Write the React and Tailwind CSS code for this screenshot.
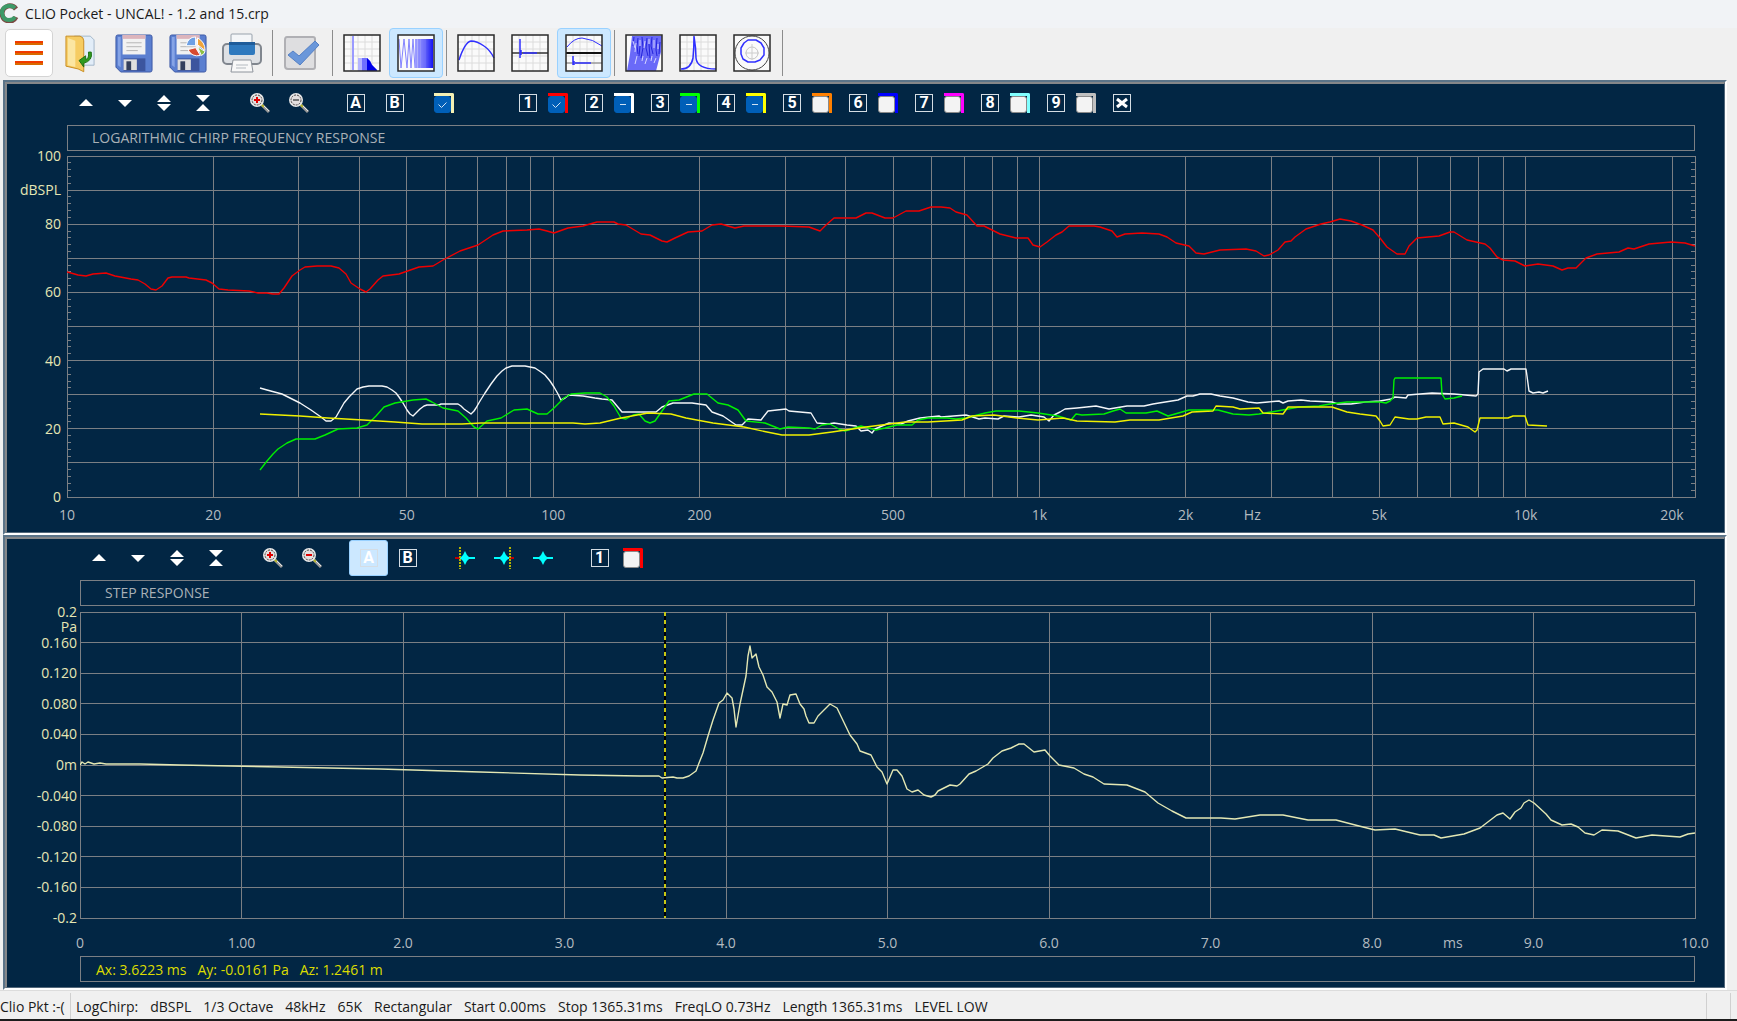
import React, { useState } from 'react';

const RED = '0,116 4,117 11,119 19,120 26,118 39,117 48,120 64,123 71,124 78,128 84,133 89,134 95,130 101,122 105,121 119,121 122,122 139,124 145,127 152,133 161,134 182,135 191,137 200,137 206,138 212,138 217,132 225,120 233,114 238,111 250,110 264,110 272,112 279,118 284,127 293,133 299,136 303,133 311,124 316,120 332,118 352,111 366,110 376,104 393,95 411,89 426,79 436,75 460,74 472,73 480,75 487,77 501,72 516,70 530,66 547,66 551,68 559,69 574,78 583,79 595,85 600,86 608,82 621,76 635,75 645,69 654,68 668,72 677,70 704,70 715,70 742,71 753,75 759,69 767,62 780,62 789,62 799,57 805,57 818,62 826,62 839,55 852,55 864,51 874,51 883,52 889,56 900,59 910,70 917,70 933,78 949,82 961,82 966,89 973,91 980,86 989,79 995,76 1002,70 1027,70 1033,71 1045,75 1050,81 1058,78 1075,77 1092,78 1100,81 1109,87 1122,90 1129,97 1137,98 1153,94 1179,93 1189,95 1197,100 1202,99 1211,94 1218,86 1224,85 1228,81 1239,73 1254,68 1263,66 1273,63 1284,65 1295,69 1306,74 1313,82 1320,91 1330,98 1338,98 1342,90 1350,82 1372,80 1383,76 1387,76 1400,84 1418,88 1423,92 1430,101 1436,104 1448,105 1458,110 1471,108 1486,110 1495,114 1501,112 1509,112 1519,102 1530,98 1552,96 1561,92 1567,93 1582,88 1604,86 1618,87 1628,90';

const WHITE = '193,232 200,234 215,238 233,247 244,254 254,261 259,265 264,265 269,261 273,254 277,247 282,241 287,236 290,233 296,231 302,230 315,230 320,231 325,234 329,237 332,241 336,247 340,254 343,258 346,260 350,256 353,253 357,250 360,249 372,249 374,248 391,248 394,250 397,253 404,258 407,255 409,252 413,245 418,237 424,228 430,220 435,215 439,212 445,210 458,210 463,211 468,212 474,216 478,219 483,225 487,231 491,238 494,244 498,242 502,239 516,240 528,242 535,243 545,244 550,250 555,256 566,256 589,256 595,251 606,247 625,247 639,249 645,256 656,260 669,269 675,269 681,263 694,264 701,255 719,253 722,255 744,257 750,267 761,268 767,267 780,269 789,270 794,275 801,274 805,277 808,273 815,270 822,267 834,268 841,265 853,262 872,260 874,261 899,259 912,263 918,262 931,263 937,260 952,261 964,259 977,261 982,265 987,259 993,256 998,253 1010,252 1029,250 1042,253 1060,250 1077,250 1086,248 1092,247 1111,244 1120,240 1126,240 1133,238 1144,238 1153,240 1166,242 1181,246 1190,247 1201,246 1212,245 1216,247 1221,245 1234,244 1243,245 1265,246 1271,248 1284,248 1298,246 1313,245 1324,243 1328,241 1339,242 1341,239 1365,237 1387,238 1409,240 1411,238 1412,216 1416,213 1437,213 1440,215 1444,213 1459,213 1460,220 1462,235 1466,237 1472,236 1476,237 1481,235';

const GREEN = '193,314 200,305 206,298 211,293 220,287 229,283 248,283 258,279 271,273 290,272 300,269 309,260 317,251 328,247 346,244 359,243 365,246 376,252 391,255 399,262 407,271 411,273 420,265 434,262 447,254 460,253 471,258 480,258 487,252 497,242 504,238 518,237 533,237 540,241 547,250 554,262 559,263 566,259 572,258 578,265 583,267 588,265 595,255 602,245 612,244 627,238 640,238 651,247 661,249 671,254 679,265 698,267 713,273 721,271 742,272 748,273 755,269 763,268 772,273 778,275 794,270 809,274 818,272 830,269 845,269 851,264 861,262 880,262 889,263 899,262 918,257 929,255 952,255 971,257 991,260 1004,264 1009,258 1015,259 1037,258 1046,255 1053,253 1059,257 1079,257 1090,255 1101,260 1122,254 1151,254 1166,258 1182,259 1192,258 1210,255 1221,253 1232,251 1252,250 1263,248 1280,246 1313,246 1319,247 1323,245 1326,242 1327,224 1328,222 1374,222 1375,238 1378,243 1387,242 1395,240';

const YELLOW = '193,258 233,260 261,262 296,264 328,266 355,268 395,268 414,267 506,267 518,268 533,267 554,262 581,257 604,258 619,262 646,267 677,271 700,276 715,279 742,279 765,276 799,271 838,266 861,266 895,264 905,260 927,259 950,262 971,264 996,262 1010,265 1048,266 1063,264 1092,264 1116,260 1125,256 1146,255 1149,250 1166,251 1173,253 1192,252 1196,257 1216,258 1221,251 1265,251 1280,256 1293,258 1309,260 1313,265 1316,270 1323,269 1328,261 1342,263 1350,263 1359,261 1373,261 1376,268 1387,267 1401,271 1408,276 1410,274 1413,262 1441,262 1446,260 1458,260 1461,269 1480,270';

const STEP = '0,153 2,150 5,152 8,150 14,152 20,151 26,152 60,152 100,153 200,155 300,157 400,160 500,163 560,164 579,164 582,166 593,165 597,166 603,166 609,164 616,159 619,151 623,141 628,124 633,108 639,91 643,88 647,81 652,86 654,97 656,115 660,92 666,64 668,44 670,34 672,46 676,42 679,55 683,63 687,75 692,80 697,90 700,106 703,92 707,93 710,83 716,82 720,92 724,97 726,104 729,111 734,111 738,104 750,92 757,96 770,123 777,132 780,139 791,143 797,155 802,160 807,172 813,158 817,158 822,164 827,177 832,180 838,178 844,183 851,185 855,183 858,179 870,173 877,174 880,172 889,162 896,159 908,152 913,146 922,139 931,136 939,132 944,132 954,140 965,138 970,144 979,153 994,156 1004,162 1013,165 1024,172 1047,173 1065,180 1078,191 1092,199 1106,206 1141,206 1155,207 1180,203 1203,203 1228,208 1256,208 1279,214 1295,218 1315,217 1340,223 1354,223 1361,226 1384,222 1400,216 1417,203 1423,201 1430,207 1435,200 1441,196 1444,191 1449,188 1454,191 1466,202 1471,208 1482,213 1491,212 1498,215 1505,221 1514,223 1522,218 1538,219 1556,226 1572,223 1600,225 1608,222 1615,221';

const GRID = '#7b7f84';
const MAX_HZ = 22300;
const hzPos = (hz) => `${(Math.log10(hz / 10) / Math.log10(MAX_HZ / 10)) * 100}%`;

const hzLines = [
  20, 30, 40, 50, 60, 70, 80, 90, 100, 200, 300, 400, 500, 600, 700, 800, 900,
  1000, 2000, 3000, 4000, 5000, 6000, 7000, 8000, 9000, 10000, 20000,
];
const hzLabels = [
  [10, '10'], [20, '20'], [50, '50'], [100, '100'], [200, '200'], [500, '500'],
  [1000, '1k'], [2000, '2k'], [2740, 'Hz'], [5000, '5k'], [10000, '10k'], [20000, '20k'],
];
const msLabels = [
  [0, '0'], [1, '1.00'], [2, '2.0'], [3, '3.0'], [4, '4.0'], [5, '5.0'],
  [6, '6.0'], [7, '7.0'], [8, '8.0'], [8.5, 'ms'], [9, '9.0'], [10, '10.0'],
];
const paLabels = ['0.2', '0.160', '0.120', '0.080', '0.040', '0m', '-0.040', '-0.080', '-0.120', '-0.160', '-0.2'];

const slots = [
  { n: 1, color: 'border-[#ff0000]', state: 'on' },
  { n: 2, color: 'border-[#ffffff]', state: 'mixed' },
  { n: 3, color: 'border-[#00ff00]', state: 'mixed' },
  { n: 4, color: 'border-[#ffff00]', state: 'mixed' },
  { n: 5, color: 'border-[#ff8000]', state: 'off' },
  { n: 6, color: 'border-[#0000ff]', state: 'off' },
  { n: 7, color: 'border-[#ff00ff]', state: 'off' },
  { n: 8, color: 'border-[#80ffff]', state: 'off' },
  { n: 9, color: 'border-[#c0c0c0]', state: 'off' },
];

function Line(props) {
  return <line stroke={GRID} shapeRendering="crispEdges" {...props} />;
}

function Curves({ viewBox, children }) {
  return (
    <svg width="100%" height="100%" viewBox={viewBox} preserveAspectRatio="none" fill="none" strokeWidth="1.4" strokeLinejoin="round">
      {children}
    </svg>
  );
}

function Curve({ points, color }) {
  return <polyline points={points} stroke={color} vectorEffect="non-scaling-stroke" />;
}

function FrequencyChart() {
  return (
    <svg className="block h-full w-full overflow-visible text-[14px]" role="img" aria-label="Frequency response">
      {hzLines.map((hz) => <Line key={hz} x1={hzPos(hz)} x2={hzPos(hz)} y1="0" y2="100%" />)}
      {[10, 20, 30, 40, 50, 60, 70, 80, 90].map((db) => (
        <Line key={db} x1="0" x2="100%" y1={`${db}%`} y2={`${db}%`} />
      ))}
      {Array.from({ length: 50 }, (_, i) => i * 2).map((db) => (
        <g key={db}>
          <Line x1="0" x2="4" y1={`${db}%`} y2={`${db}%`} />
          <svg x="100%" className="overflow-visible">
            <Line x1="-4" x2="0" y1={`${db}%`} y2={`${db}%`} />
          </svg>
        </g>
      ))}
      <rect width="100%" height="100%" fill="none" stroke={GRID} shapeRendering="crispEdges" />
      <Curves viewBox="0 0 1628 341">
        <Curve points={RED} color="#f00000" />
        <Curve points={WHITE} color="#f4f6f8" />
        <Curve points={GREEN} color="#00f000" />
        <Curve points={YELLOW} color="#f0f000" />
      </Curves>
      <g fill="#e6e6b4" textAnchor="end">
        {[100, 80, 60, 40, 20, 0].map((db) => (
          <text key={db} x="-6" y={`${100 - db}%`} dy="5">{db}</text>
        ))}
        <text x="-6" y="10%" dy="5">dBSPL</text>
      </g>
      <g fill="#b4bbc0" textAnchor="middle">
        {hzLabels.map(([hz, label]) => (
          <text key={label} x={hzPos(hz)} y="100%" dy="23">{label}</text>
        ))}
      </g>
    </svg>
  );
}

function StepChart() {
  return (
    <svg className="block h-full w-full overflow-visible text-[14px]" role="img" aria-label="Step response">
      {[10, 20, 30, 40, 50, 60, 70, 80, 90].map((p) => (
        <g key={p}>
          <Line x1={`${p}%`} x2={`${p}%`} y1="0" y2="100%" />
          <Line x1="0" x2="100%" y1={`${p}%`} y2={`${p}%`} />
        </g>
      ))}
      <rect width="100%" height="100%" fill="none" stroke={GRID} shapeRendering="crispEdges" />
      <line x1="36.22%" x2="36.22%" y1="0" y2="100%" stroke="#000" strokeWidth="2" shapeRendering="crispEdges" />
      <line x1="36.22%" x2="36.22%" y1="0" y2="100%" stroke="#c8c814" strokeWidth="2" strokeDasharray="4 4" shapeRendering="crispEdges" />
      <Curves viewBox="0 0 1615 306">
        <Curve points={STEP} color="#e4e8b4" />
      </Curves>
      <g fill="#e6e6b4" textAnchor="end">
        {paLabels.map((label, i) => (
          <text key={label} x="-3" y={`${i * 10}%`} dy="5">{label}</text>
        ))}
        <text x="-3" y="5%" dy="5">Pa</text>
      </g>
      <g fill="#b4bbc0" textAnchor="middle">
        {msLabels.map(([ms, label]) => (
          <text key={label} x={`${ms * 10}%`} y="100%" dy="30">{label}</text>
        ))}
      </g>
    </svg>
  );
}

function TraceCheck({ label, color, state }) {
  const [value, setValue] = useState(state);
  return (
    <label className={`flex size-5 items-end rounded-tr-xs border-t-[3px] border-r-[3px] ${color}`}>
      <span className="grid size-[17px]">
        <input
          type="checkbox"
          aria-label={label}
          checked={value === 'on'}
          ref={(el) => { if (el) el.indeterminate = value === 'mixed'; }}
          onChange={() => setValue(value === 'off' ? 'on' : 'off')}
          className="col-start-1 row-start-1 size-[17px] appearance-none rounded-[3px] border border-[#8a8a8a] bg-[#f3f3f3] checked:border-[#005fb8] checked:bg-[#005fb8] indeterminate:border-[#005fb8] indeterminate:bg-[#005fb8]"
        />
        <svg viewBox="0 0 17 17" className="pointer-events-none col-start-1 row-start-1" fill="none" stroke="#cfe2f4">
          {value === 'on' && <path d="M4.500 8.500 7.500 11.500 12.500 6.500" />}
          {value === 'mixed' && <path d="M6 8.500H12" />}
        </svg>
      </span>
    </label>
  );
}

function ToolButton({ label, active, children }) {
  return (
    <button
      type="button"
      aria-label={label}
      className={`flex h-9 w-[39px] items-center justify-center rounded-[3px] ${active ? 'border border-[#99d1ff] bg-[#cce8ff]' : ''}`}
    >
      {children}
    </button>
  );
}

function Boxed({ children }) {
  return (
    <span className="flex size-[18px] items-center justify-center border border-[#d5dde4] font-[Roboto,sans-serif] text-[16px] leading-none font-bold text-white">
      {children}
    </span>
  );
}

function Magnifier({ sign, color }) {
  return (
    <svg width="22" height="22" viewBox="0 0 22 22" fill="none">
      <path d="M13 13 20 20" stroke="#9a9a9a" strokeWidth="3" />
      <path d="M12 12 15 15" stroke="#b5b52a" strokeWidth="2" />
      <path d="M15 14 20 19" stroke="#e6e6e6" />
      <circle cx="8" cy="8" r="6" fill="#e4dfdf" stroke="#e8e8e8" strokeWidth="2" />
      <circle cx="8" cy="8" r="5" stroke="#4b4444" strokeDasharray="2 1" />
      <path d={sign === '+' ? 'M5 8h6M8 5v6' : 'M5 8h6'} stroke={color} strokeWidth="2" />
    </svg>
  );
}

function Impulse({ marker }) {
  return (
    <svg width="22" height="22" viewBox="0 0 22 22">
      <path d="M1 11H21" stroke="#00ffff" strokeWidth="2" />
      <path d="M11 4 13 8 16 11 13 14 11 18 9 14 6 11 9 8Z" fill="#00ffff" />
      {marker === 'start' && (
        <>
          <path d="M1 11H6" stroke="#c00000" strokeWidth="2" />
          <path d="M6 0V22" stroke="#b4b400" strokeWidth="2" strokeDasharray="2 1" />
        </>
      )}
      {marker === 'end' && (
        <>
          <path d="M16 11H21" stroke="#c00000" strokeWidth="2" />
          <path d="M17 0V22" stroke="#b4b400" strokeWidth="2" strokeDasharray="2 1" />
        </>
      )}
    </svg>
  );
}

function ViewButtons({ minusColor }) {
  return (
    <>
      <ToolButton label="Shift up">
        <svg width="14" height="16" viewBox="0 0 14 16" fill="#fff"><path d="M7 4 14 11H0Z" /></svg>
      </ToolButton>
      <ToolButton label="Shift down">
        <svg width="14" height="16" viewBox="0 0 14 16" fill="#fff"><path d="M0 5H14L7 12Z" /></svg>
      </ToolButton>
      <ToolButton label="Expand">
        <svg width="14" height="18" viewBox="0 0 14 18" fill="#fff"><path d="M7 1 14 8H0ZM0 10H14L7 17Z" /></svg>
      </ToolButton>
      <ToolButton label="Compress">
        <svg width="14" height="18" viewBox="0 0 14 18" fill="#fff"><path d="M0 1H14L7 8ZM7 10 14 17H0Z" /></svg>
      </ToolButton>
      <div className="w-[18px]" />
      <ToolButton label="Zoom in"><Magnifier sign="+" color="#e00000" /></ToolButton>
      <ToolButton label="Zoom out"><Magnifier sign="-" color={minusColor} /></ToolButton>
      <div className="w-[18px]" />
    </>
  );
}

function Panel({ pad, children }) {
  return (
    <section className="mr-[10px] ml-[3px] flex min-h-0 flex-1 border-2 border-t-[#5b7489] border-r-white border-b-white border-l-[#5b7489]">
      <div className={`flex min-w-0 flex-1 flex-col border-t-2 border-r border-b border-l-2 border-t-[#85878a] border-r-[#52677a] border-b-[#52677a] border-l-[#85878a] bg-[#022644] pr-[29px] ${pad}`}>
        {children}
      </div>
    </section>
  );
}

function MainButton({ label, active, children }) {
  return (
    <button
      type="button"
      aria-label={label}
      className={`flex h-[50px] w-[54px] items-center justify-center rounded-[4px] ${active ? 'border border-[#99d1ff] bg-[#cce8ff]' : ''}`}
    >
      {children}
    </button>
  );
}

function Separator() {
  return <div className="flex h-[46px] w-[6px] justify-center"><div className="w-px bg-[#8c8c8c]" /></div>;
}

// framed 38x38 thumbnail used by the measurement buttons
function Thumb({ grid = true, children }) {
  return (
    <svg width="38" height="38" viewBox="0 0 38 38" fill="none">
      <rect x="1" y="1" width="36" height="36" fill="#fafafa" />
      {grid && <path d="M8 1V37M15 1V37M22 1V37M29 1V37M1 8H37M1 15H37M1 22H37M1 29H37" stroke="#dcdcdc" />}
      {children}
      <rect x="1" y="1" width="36" height="36" stroke="#2a2a2a" strokeWidth="1.500" />
    </svg>
  );
}

function Floppy({ chart }) {
  return (
    <svg width="38" height="39" viewBox="0 0 40 40" preserveAspectRatio="none">
      <path d="M3 1H37Q39 1 39 3V37Q39 39 37 39H6L1 34V3Q1 1 3 1Z" fill="#5b7fd0" stroke="#3c58a4" />
      <path d="M3 3H6V34L3 32Z" fill="#86a4e6" />
      <rect x="8" y="1" width="24" height="20" fill="#f2f2f2" />
      <rect x="8" y="1" width="24" height="4" fill="#dcb4bc" />
      <path d="M12 9H28M12 13H28M12 17H24" stroke="#b4b4b4" />
      <rect x="9" y="25" width="23" height="13" fill="#3c559e" />
      <rect x="9" y="26" width="14" height="11" fill="#dedede" />
      <rect x="12" y="28" width="5" height="9" fill="#333f5c" />
      {chart && (
        <g stroke="#fff">
          <path d="M28 12H18Q20 3 28 3Z" fill="#6ea0e4" />
          <path d="M30 11V4Q38 8 38 17L30 11Z" fill="#f0a43c" />
          <path d="M30 13 38 18Q37 21 34 22Z" fill="#8cbf46" />
          <path d="M28 14 33 22Q24 24 20 16Z" fill="#d84a30" />
        </g>
      )}
    </svg>
  );
}

function MainToolbar() {
  return (
    <div className="flex h-[52px] shrink-0 items-center bg-[#f0f0f0] pb-[2px] pl-[5px]">
      <button type="button" aria-label="Menu" className="flex size-12 items-center justify-center rounded-[5px] border border-[#d4d4d4] bg-white">
        <svg width="28" height="26" viewBox="0 0 28 26">
          <path d="M0 3H28M0 13H28M0 23H28" stroke="#f03a00" strokeWidth="4" />
          <path d="M0 4H28M0 14H28M0 24H28" stroke="#d86a00" strokeWidth="2" />
        </svg>
      </button>
      <MainButton label="Open">
        <svg width="30" height="40" viewBox="0 0 32 42">
          <path d="M10 3H27L31 7V34H10Z" fill="#e2edf8" stroke="#9fb4c8" />
          <path d="M1 3H16Q20 4 20 8V41L14 38 1 35Z" fill="#f6cc62" stroke="#c68a1e" />
          <path d="M3 5 11 8V36L3 34Z" fill="#fbe6a2" />
          <path d="M28 20Q30 29 20 32V36L15 29 22 24V28Q26 27 25 20Z" fill="#2f9a1e" stroke="#1d6f12" />
        </svg>
      </MainButton>
      <MainButton label="Save"><Floppy /></MainButton>
      <MainButton label="Save chart"><Floppy chart /></MainButton>
      <MainButton label="Print">
        <svg width="40" height="40" viewBox="0 0 40 40">
          <rect x="9" y="1" width="21" height="16" rx="1" fill="#f4f6f8" stroke="#98a2ac" />
          <rect x="1" y="11" width="38" height="20" rx="4" fill="#dde0e4" stroke="#80868e" strokeWidth="2" />
          <path d="M7 9H33V20Q33 22 31 22H9Q7 22 7 20Z" fill="#2e79be" />
          <path d="M7 9H33V12H7Z" fill="#1e5c9a" />
          <path d="M11 27H29L31 39H9Z" fill="#f8f8f8" stroke="#8e949c" />
          <path d="M14 32H26M14 35H24" stroke="#b4bac0" />
        </svg>
      </MainButton>
      <Separator />
      <MainButton label="Confirm">
        <svg width="36" height="36" viewBox="0 0 36 36">
          <path d="M3 2H29Q31 2 31 4V32Q31 34 29 34H4Q1 34 1 31V5Q1 2 3 2Z" fill="#dedee0" stroke="#b0b0b4" strokeWidth="2" />
          <path d="M4 20 9 16 15 21 31 6 35 10 16 30Z" fill="#6a97da" stroke="#5580c4" />
        </svg>
      </MainButton>
      <Separator />
      <MainButton label="FFT">
        <Thumb>
          <path d="M10 2V36" stroke="#9a9aff" strokeWidth="2" />
          <path d="M15 37V24H24L27 27 29 31 34 36V37Z" fill="#b4b4ff" />
          <path d="M19 37V24H24L27 27 29 31 34 36V37Z" fill="#7070ff" />
          <path d="M24 24 27 27 29 31 34 36V37H24Z" fill="#0000e8" />
        </Thumb>
      </MainButton>
      <MainButton label="Chirp" active>
        <Thumb grid={false}>
          <defs>
            <linearGradient id="chirp">
              <stop offset="0" stopColor="#c8c8ff" />
              <stop offset="1" stopColor="#1414f4" />
            </linearGradient>
          </defs>
          <path d="M2 5 4 34 7 5 10 34 12 5 14 34 16 5 18 34" stroke="#8484ff" />
          <rect x="18" y="5" width="18" height="29" fill="url(#chirp)" />
          <path d="M19 5V34M22 5V34M25 5V34M28 5V34" stroke="#7474ff" />
        </Thumb>
      </MainButton>
      <Separator />
      <MainButton label="Frequency response">
        <Thumb><path d="M2 26Q8 8 14 7Q20 7 27 12Q33 16 37 24" stroke="#3030ff" strokeWidth="1.500" /></Thumb>
      </MainButton>
      <MainButton label="Impulse response">
        <Thumb>
          <path d="M1 19H37" stroke="#333" strokeWidth="1.500" />
          <path d="M9 5V24M10 16V21M12 19H26" stroke="#3030ff" strokeWidth="1.500" />
        </Thumb>
      </MainButton>
      <MainButton label="Frequency and time" active>
        <Thumb>
          <path d="M2 13Q9 4 17 4Q28 5 37 12" stroke="#3030ff" />
          <path d="M1 19H37" stroke="#111" strokeWidth="2" />
          <path d="M1 29H37" stroke="#777" />
          <path d="M8 22V31M9 27V31M10 29H26" stroke="#3030ff" strokeWidth="1.500" />
        </Thumb>
      </MainButton>
      <Separator />
      <MainButton label="Waterfall">
        <Thumb grid={false}>
          <path d="M7 2H37L36 18 31 37H2L5 20Z" fill="#6a6af8" />
          <path d="M9 3 8 12M13 4 12 12 13 20M17 3 18 14 16 24M22 4 21 14 23 22M27 3 26 12 28 20M32 4 31 16 32 22M35 8 34 20M15 12 14 22M24 10 25 24" stroke="#2424dc" />
          <path d="M8 7 10 14M11 9 10 18M15 6 15 12M20 7 19 14M24 5 24 10M29 6 29 14M33 10 33 15M12 22 10 30M18 22 17 27M22 24 20 30M27 22 26 27M31 24 29 29" stroke="#d4d4ff" />
        </Thumb>
      </MainButton>
      <MainButton label="Spectrum">
        <Thumb><path d="M2 35Q12 35 14 24 15 14 15 2 17 14 17 24 18 35 37 35" stroke="#3030ff" strokeWidth="1.500" /></Thumb>
      </MainButton>
      <MainButton label="Polar">
        <Thumb grid={false}>
          <circle cx="19" cy="19" r="17" stroke="#444" />
          <circle cx="19" cy="19" r="6" stroke="#c4c4c4" />
          <path d="M19 10V26M12 19H26" stroke="#ccc" />
          <path d="M11 9 15 6H23L28 9 31 14V21L27 26 22 28H15L10 25 8 20V14Z" stroke="#3030ff" strokeWidth="1.500" strokeLinejoin="round" />
        </Thumb>
      </MainButton>
      <Separator />
    </div>
  );
}

export default function App() {
  return (
    <div className="flex h-screen min-h-[640px] flex-col overflow-hidden bg-[#f0f0f0] font-['Open_Sans','Noto_Sans',sans-serif] text-[14px] whitespace-nowrap text-[#1a1a1a]">
      <header className="flex h-7 shrink-0 items-center gap-[6px] bg-[#f1f3f6] pb-[2px]">
        <svg width="19" height="20" viewBox="0 0 19 20" fill="none">
          <path d="M16 6Q13 2 8 3Q2 5 2 11Q3 18 10 18Q14 18 16 14" stroke="#7c4a44" strokeWidth="5" />
          <path d="M15 5Q12 2 8 3Q2 4 2 10Q3 17 9 17Q13 17 15 14" stroke="#3d9a68" strokeWidth="4" />
        </svg>
        <h1>CLIO Pocket - UNCAL! - 1.2 and 15.crp</h1>
      </header>

      <MainToolbar />

      <Panel pad="pl-[60px] pb-[35px]">
        <div className="-ml-px flex h-[38px] shrink-0 items-center">
          <ViewButtons minusColor="#777777" />
          <ToolButton label="Cursor A"><Boxed>A</Boxed></ToolButton>
          <ToolButton label="Cursor B"><Boxed>B</Boxed></ToolButton>
          <div className="ml-5 flex">
            <TraceCheck label="Main trace" color="border-[#f4f0b4]" state="on" />
          </div>
          <div className="w-[65px]" />
          {slots.map((s) => (
            <div key={s.n} className="flex w-[66px] items-center gap-[11px]">
              <button type="button" aria-label={`Overlay ${s.n}`}><Boxed>{s.n}</Boxed></button>
              <TraceCheck label={`Show overlay ${s.n}`} color={s.color} state={s.state} />
            </div>
          ))}
          <button type="button" aria-label="Clear overlays">
            <Boxed>
              <svg width="12" height="12" viewBox="0 0 12 12" stroke="#fff" strokeWidth="3"><path d="M1 2 11 10M11 2 1 10" /></svg>
            </Boxed>
          </button>
        </div>
        <h2 className="mt-[3px] flex h-[26px] shrink-0 items-center border border-[#7b7f84] px-6 pb-px text-[#a9b1b7]">
          LOGARITHMIC CHIRP FREQUENCY RESPONSE
        </h2>
        <div className="mt-[5px] min-h-0 flex-1"><FrequencyChart /></div>
      </Panel>

      <Panel pad="pl-[73px] pb-[5px]">
        <div className="-ml-px flex h-[38px] shrink-0 items-center">
          <ViewButtons minusColor="#e00000" />
          <ToolButton label="Cursor A" active><Boxed>A</Boxed></ToolButton>
          <ToolButton label="Cursor B"><Boxed>B</Boxed></ToolButton>
          <div className="w-[18px]" />
          <ToolButton label="Start window"><Impulse marker="start" /></ToolButton>
          <ToolButton label="Stop window"><Impulse marker="end" /></ToolButton>
          <ToolButton label="No window"><Impulse /></ToolButton>
          <div className="w-[18px]" />
          <ToolButton label="Overlay 1"><Boxed>1</Boxed></ToolButton>
          <div className="ml-[4px] flex">
            <TraceCheck label="Show step overlay 1" color="border-[#ff0000]" state="off" />
          </div>
        </div>
        <h2 className="mt-[3px] flex h-[26px] shrink-0 items-center border border-[#7b7f84] px-6 pb-px text-[#a9b1b7]">
          STEP RESPONSE
        </h2>
        <div className="mt-[6px] min-h-0 flex-1"><StepChart /></div>
        <div className="mt-[38px] flex h-[26px] shrink-0 items-center gap-[11px] border border-[#7b7f84] px-[15px] text-[#dcdc00]">
          <span>Ax: 3.6223 ms</span>
          <span>Ay: -0.0161 Pa</span>
          <span>Az: 1.2461 m</span>
        </div>
      </Panel>

      <footer className="flex h-[31px] shrink-0 items-stretch border-t border-b-2 border-t-[#dcdcdc] border-b-[#1c1c1c] pt-[2px]">
        <span className="flex w-[71px] items-center overflow-hidden border-r border-[#d0d0d0]">Clio Pkt :-(</span>
        <div className="flex flex-1 items-center gap-3 pl-[5px]">
          <span>LogChirp:</span>
          <span>dBSPL</span>
          <span>1/3 Octave</span>
          <span>48kHz</span>
          <span>65K</span>
          <span>Rectangular</span>
          <span>Start 0.00ms</span>
          <span>Stop 1365.31ms</span>
          <span>FreqLO 0.73Hz</span>
          <span>Length 1365.31ms</span>
          <span>LEVEL LOW</span>
        </div>
        <span className="w-[25px] border-x border-[#d0d0d0]" />
        <span className="w-[6px]" />
      </footer>
    </div>
  );
}
